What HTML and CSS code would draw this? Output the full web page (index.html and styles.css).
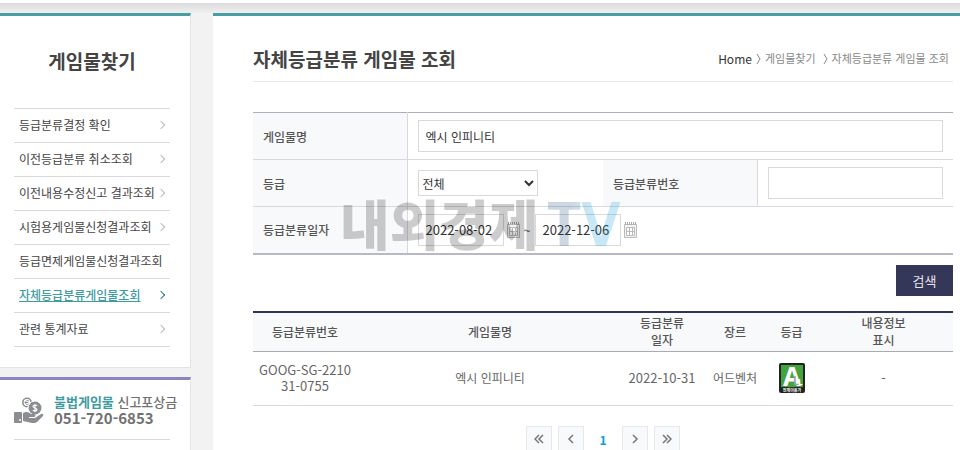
FILE: index.html
```html
<!DOCTYPE html>
<html lang="ko">
<head>
    <meta charset="UTF-8">
    <meta name="viewport" content="width=device-width, initial-scale=1.0">
    <title>자체등급분류 게임물 조회</title>
    <link rel="stylesheet" href="styles.css">
</head>
<body>
    <div class="topbar"></div>
    <div class="container">
        <aside class="sidebar">
            <nav class="side-box">
                <h2>게임물찾기</h2>
                <ul class="menu">
                    <li><a href="#">등급분류결정 확인</a></li>
                    <li><a href="#">이전등급분류 취소조회</a></li>
                    <li><a href="#">이전내용수정신고 결과조회</a></li>
                    <li><a href="#">시험용게임물신청결과조회</a></li>
                    <li><a href="#" class="long">등급면제게임물신청결과조회</a></li>
                    <li><a href="#" class="active">자체등급분류게임물조회</a></li>
                    <li><a href="#">관련 통계자료</a></li>
                </ul>
            </nav>
            <div class="side-box report-box">
                <div class="report">
                    <svg width="30" height="27" viewBox="0 0 30 27">
                        <g fill="#8b8d92">
                            <rect x="0" y="15" width="8" height="11" rx="1"/>
                            <path d="M9 16 C12 14 15 15 17 17 H20 C22 17 22 20 20 20 H15 V21 H21 L27 17 C29 16 30 18 29 19 L23 25 C22 26 20 26 18 26 L9 24 Z"/>
                            <circle cx="21" cy="11" r="6.5"/>
                        </g>
                        <circle cx="13" cy="5.5" r="4.2" fill="none" stroke="#8b8d92" stroke-width="1.6"/>
                        <path d="M15 4 C13 3 11.5 4 11.5 5.5 C11.5 7.5 13 8 15 7 M10.5 5.5 H14" fill="none" stroke="#8b8d92"/>
                        <path d="M14 11 A7 7 0 0 1 20 4" fill="none" stroke="#fff"/>
                        <path d="M23 9 C22 7.5 19 8 19 9.5 C19 11 23 11 23 12.5 C23 14.5 19.5 14.5 19 13 M21 7 V15" fill="none" stroke="#fff" stroke-width="1.2"/>
                        <circle cx="6" cy="23" r="1" fill="#fff"/>
                    </svg>
                    <p><strong>불법게임물</strong> 신고포상금<br><span class="phone">051-720-6853</span></p>
                </div>
            </div>
        </aside>

        <main class="content">
            <header class="page-head">
                <h1>자체등급분류 게임물 조회</h1>
                <div class="breadcrumb">
                    <a href="#" class="home">Home</a>
                    <svg width="5" height="12" viewBox="0 0 5 12"><path d="M1 1 L4 6 L1 11"/></svg>
                    <a href="#">게임물찾기</a>
                    <svg class="second" width="5" height="12" viewBox="0 0 5 12"><path d="M1 1 L4 6 L1 11"/></svg>
                    <a href="#">자체등급분류 게임물 조회</a>
                </div>
            </header>

            <form class="search">
                <table class="search-table">
                    <colgroup>
                        <col class="label-col"><col><col class="label-col"><col>
                    </colgroup>
                    <tr>
                        <th><label for="gameName">게임물명</label></th>
                        <td colspan="3"><input type="text" id="gameName" value="엑시 인피니티"></td>
                    </tr>
                    <tr>
                        <th><label for="grade">등급</label></th>
                        <td><select id="grade"><option>전체</option></select></td>
                        <th><label for="gradeNo">등급분류번호</label></th>
                        <td><input type="text" id="gradeNo"></td>
                    </tr>
                    <tr>
                        <th><label for="startDate">등급분류일자</label></th>
                        <td colspan="3">
                            <div class="dates">
                                <input type="text" id="startDate" value="2022-08-02">
                                <button type="button" class="calendar" aria-label="시작일 선택">
                                    <svg width="13" height="16" viewBox="0 0 13 16"><path d="M0.5 2.5 H12.5 V15.5 H0.5 Z" fill="#f3f3f3" stroke="#bbb"/><path d="M1.5 0 V3 M3.5 0 V3 M5.5 0 V3 M7.5 0 V3 M9.5 0 V3 M11.5 0 V3" stroke="#aaa"/><path d="M2.5 5.5 H10.5 V13.5 H2.5 Z M2.5 9.5 H10.5 M5.5 5.5 V13.5 M8.5 5.5 V13.5" fill="#fff" stroke="#bbb"/></svg>
                                </button>
                                <span class="tilde">~</span>
                                <input type="text" id="endDate" aria-label="종료일" value="2022-12-06">
                                <button type="button" class="calendar" aria-label="종료일 선택">
                                    <svg width="13" height="16" viewBox="0 0 13 16"><path d="M0.5 2.5 H12.5 V15.5 H0.5 Z" fill="#f3f3f3" stroke="#bbb"/><path d="M1.5 0 V3 M3.5 0 V3 M5.5 0 V3 M7.5 0 V3 M9.5 0 V3 M11.5 0 V3" stroke="#aaa"/><path d="M2.5 5.5 H10.5 V13.5 H2.5 Z M2.5 9.5 H10.5 M5.5 5.5 V13.5 M8.5 5.5 V13.5" fill="#fff" stroke="#bbb"/></svg>
                                </button>
                            </div>
                        </td>
                    </tr>
                </table>
                <div class="watermark"><span>내외경제</span><span class="tv">TV</span></div>
                <div class="button-container">
                    <button type="submit" class="submit">검색</button>
                </div>
            </form>

            <table class="results">
                <colgroup>
                    <col class="col-no"><col><col class="col-date"><col class="col-genre"><col class="col-grade"><col class="col-info">
                </colgroup>
                <thead>
                    <tr>
                        <th>등급분류번호</th>
                        <th>게임물명</th>
                        <th>등급분류<br>일자</th>
                        <th>장르</th>
                        <th>등급</th>
                        <th>내용정보<br>표시</th>
                    </tr>
                </thead>
                <tbody>
                    <tr>
                        <td>GOOG-SG-2210<br>31-0755</td>
                        <td class="name">엑시 인피니티</td>
                        <td>2022-10-31</td>
                        <td class="name">어드벤처</td>
                        <td>
                            <svg class="rating" width="26" height="30" viewBox="0 0 26 30" role="img" aria-label="전체이용가">
                                <rect width="26" height="30" rx="2" fill="#222"/>
                                <rect x="2" y="2" width="22" height="22" fill="#43a33d"/>
                                <text x="4" y="23" class="big">A</text>
                                <text x="14" y="22" class="mid">L</text>
                                <text x="19" y="22" class="small">L</text>
                                <text x="13" y="29" class="tiny" text-anchor="middle">전체이용가</text>
                            </svg>
                        </td>
                        <td>-</td>
                    </tr>
                </tbody>
            </table>

            <nav class="pager">
                <a href="#" class="arrow" aria-label="처음"><svg width="10" height="10" viewBox="0 0 10 10"><path d="M5 1 L1 5 L5 9 M9 1 L5 5 L9 9"/></svg></a>
                <a href="#" class="arrow" aria-label="이전"><svg width="10" height="10" viewBox="0 0 10 10"><path d="M7 1 L3 5 L7 9"/></svg></a>
                <a href="#" class="current">1</a>
                <a href="#" class="arrow" aria-label="다음"><svg width="10" height="10" viewBox="0 0 10 10"><path d="M3 1 L7 5 L3 9"/></svg></a>
                <a href="#" class="arrow" aria-label="마지막"><svg width="10" height="10" viewBox="0 0 10 10"><path d="M1 1 L5 5 L1 9 M5 1 L9 5 L5 9"/></svg></a>
            </nav>
        </main>
    </div>
</body>
</html>
```
FILE: styles.css
```css
* {
    box-sizing: border-box;
}

body {
    margin: 0;
    height: 100vh;
    overflow: hidden;
    display: flex;
    flex-direction: column;
    background-color: #f2f2f2;
    color: #444;
    font-family: "Noto Sans CJK KR", sans-serif;
    font-size: 12px;
    line-height: 17px;
}

h1, h2, p, ul {
    margin: 0;
    padding: 0;
}

a {
    color: inherit;
    text-decoration: none;
}

input, select, button {
    font-family: inherit;
    color: #333;
}

.topbar {
    flex: none;
    height: 13px;
    border-top: 3px solid #fff;
    background: linear-gradient(#dcdcdc, #efefef);
}

.container {
    flex: 1;
    display: flex;
    gap: 22px;
}

/* sidebar */
.sidebar {
    flex: none;
    width: 191px;
    display: flex;
    flex-direction: column;
    gap: 9px;
}

.side-box {
    padding: 0 20px 20px 14px;
    background-color: #fff;
    border: 1px solid #e3e3e3;
    border-width: 3px 1px 1px 0;
    border-top-color: #489fa3;
}

.side-box h2 {
    padding: 30px 0 32px;
    font-size: 19px;
    line-height: 30px;
    text-align: center;
}

.menu {
    list-style: none;
    border-top: 1px solid #d9d9dd;
}

.menu li {
    border-bottom: 1px solid #d9d9dd;
}

.menu a {
    display: flex;
    align-items: center;
    justify-content: space-between;
    height: 33px;
    padding: 0 6px 2px 5px;
    white-space: nowrap;
}

.menu a::after {
    content: "";
    flex: none;
    width: 5px;
    height: 5px;
    border: solid #bbb;
    border-width: 1px 1px 0 0;
    transform: rotate(45deg);
}

.menu a.long::after {
    display: none;
}

.menu a.active {
    color: #3e9ba0;
    font-weight: 500;
    text-decoration: underline;
}

.menu a.active::after {
    border-color: #2a7f84;
}

.report-box {
    flex: 1;
    padding-right: 13px;
    border-top-color: #8f83bd;
}

.report {
    display: flex;
    gap: 10px;
    margin-right: 7px;
    padding: 14px 0 12px;
    border-bottom: 1px solid #d9d9dd;
    color: #717171;
    font-size: 13px;
    line-height: 16px;
    font-weight: 500;
    white-space: nowrap;
}

.report svg {
    flex: none;
    margin-top: 3px;
}

.report strong {
    color: #3e9ba0;
}

.phone {
    font-size: 15px;
    font-weight: bold;
}

/* main */
.content {
    flex: 1;
    min-width: 0;
    padding: 0 7px 0 40px;
    background-color: #fff;
    border-top: 3px solid #489fa3;
}

.page-head {
    display: flex;
    align-items: center;
    justify-content: space-between;
    height: 66px;
    padding: 20px 4px 0 0;
    border-bottom: 1px solid #e8e8e8;
}

.page-head h1 {
    font-size: 19px;
    line-height: 30px;
}

.breadcrumb {
    display: flex;
    align-items: center;
    gap: 4px;
    color: #888;
    font-size: 11px;
}

.breadcrumb .home {
    color: #333;
    font-size: 12px;
}

.breadcrumb svg {
    fill: none;
    stroke: #888;
}

.breadcrumb .second {
    margin-left: 3px;
}

.search {
    position: relative;
    margin-top: 30px;
}

table {
    width: 100%;
    border-collapse: collapse;
    table-layout: fixed;
}

.search-table {
    border-top: 1px solid #b0aebd;
    border-bottom: 2px solid #b9b8c6;
}

.label-col {
    width: 154px;
}

.search-table th,
.search-table td {
    height: 47px;
    padding: 0 10px;
    border-bottom: 1px solid #d9d9dd;
    text-align: left;
}

.search-table th {
    background-color: #f8f9fb;
    border-right: 1px solid #d9d9dd;
    color: #555;
    font-weight: 500;
}

.search input {
    display: block;
    width: 100%;
    height: 32px;
    padding: 0 7px;
    border: 1px solid #d9d9dd;
    font-size: 12px;
}

.search select {
    display: block;
    width: 120px;
    height: 26px;
    padding: 0;
    border: 1px solid #d9d9dd;
    background-color: #fff;
    font-size: 12px;
}

.search .dates {
    display: flex;
    align-items: center;
    gap: 3px;
}

.search .dates input {
    width: 86px;
    font-size: 13px;
}

.calendar {
    height: 16px;
    padding: 0;
    border: 0;
    background: none;
}

.calendar svg {
    display: block;
}

.tilde {
    width: 9px;
    text-align: center;
}

.watermark {
    position: absolute;
    top: 81px;
    left: 87px;
    display: flex;
    align-items: center;
    gap: 8px;
    color: rgba(0, 0, 0, 0.2);
    font-size: 54px;
    font-weight: 900;
    line-height: 60px;
    pointer-events: none;
}

.watermark .tv {
    background: linear-gradient(90deg, #1d4c80 30%, #0a9bd6 60%);
    background-clip: text;
    -webkit-background-clip: text;
    color: transparent;
    font-family: "Open Sans", sans-serif;
    font-size: 60px;
    font-weight: bold;
    opacity: 0.22;
}

.button-container {
    display: flex;
    justify-content: flex-end;
    padding: 10px 0 15px;
}

.submit {
    width: 57px;
    height: 31px;
    padding: 0;
    border: 0;
    background-color: #343757;
    color: #e4e4ea;
    font-size: 13px;
}

.results {
    border-top: 2px solid #31345a;
    color: #666;
    text-align: center;
}

.col-no {
    width: 104px;
}

.col-date {
    width: 78px;
}

.col-genre {
    width: 68px;
}

.col-grade {
    width: 45px;
}

.col-info {
    width: 139px;
}

.results th {
    height: 40px;
    padding: 0 0 1px;
    background-color: #f8f9fb;
    border-bottom: 1px solid #aaabb0;
    color: #555;
    font-weight: 500;
}

.results td {
    height: 54px;
    padding: 0 0 2px;
    border-bottom: 1px solid #d9d9dd;
    font-size: 13px;
    line-height: 16px;
}

.results td.name {
    font-size: 12px;
}

.rating {
    display: block;
    margin: 0 auto;
    fill: #fff;
    font-weight: bold;
}

.rating .big {
    font-size: 26px;
    font-family: "Liberation Sans Narrow", "Open Sans", sans-serif;
}

.rating .mid {
    fill: #9aa3ae;
    font-size: 11px;
}

.rating .small {
    font-size: 8px;
}

.rating .tiny {
    font-size: 4px;
}

.pager {
    display: flex;
    justify-content: center;
    gap: 6px;
    margin-top: 20px;
}

.pager a {
    display: flex;
    align-items: center;
    justify-content: center;
    width: 26px;
    height: 26px;
}

.pager .current {
    color: #0b9edb;
    font-weight: bold;
}

.pager .arrow {
    background-color: #f8f9fb;
    border: 1px solid #e6e8f0;
}

.pager svg {
    fill: none;
    stroke: #777;
    stroke-width: 1.5;
}
```
